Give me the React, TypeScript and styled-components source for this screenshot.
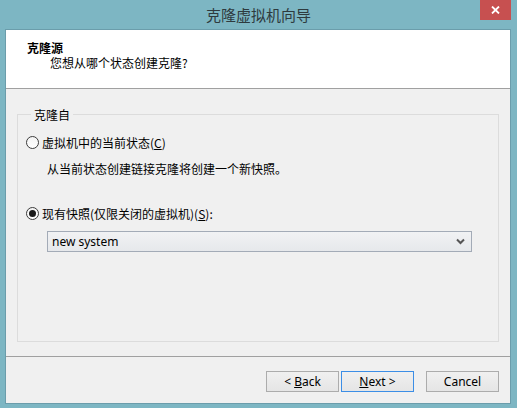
import React, { useState } from "react";
import styled, { createGlobalStyle } from "styled-components";

const GlobalStyle = createGlobalStyle`
  html, body {
    margin: 0;
    padding: 0;
  }
  body {
    font-family: "Noto Sans", "Noto Sans CJK SC", sans-serif;
    font-size: 12px;
    color: #000;
  }
`;

const Window = styled.div`
  width: 517px;
  height: 408px;
  box-sizing: border-box;
  background: #7db6c3;
  padding: 0 6px 4px 5px;
  display: flex;
  flex-direction: column;
`;

const TitleBar = styled.div`
  position: relative;
  height: 29px;
  margin: 0 -6px 0 -5px;
  display: flex;
  align-items: center;
  justify-content: center;
`;

const Title = styled.div`
  font-family: "Noto Sans CJK SC", sans-serif;
  font-size: 15px;
  color: #2e3a3e;
  padding-bottom: 1px;
`;

const CloseButton = styled.div`
  position: absolute;
  top: 0;
  right: 6px;
  width: 31px;
  height: 20px;
  background: #c75050;
  display: flex;
  align-items: center;
  justify-content: center;
`;

const Client = styled.div`
  flex: 1;
  border: 1px solid #6b9dab;
  background: #f0f0f0;
  display: flex;
  flex-direction: column;
`;

const Header = styled.div`
  height: 59px;
  box-sizing: border-box;
  background: #fff;
  border-bottom: 1px solid #a0a0a0;
  padding: 10px 0 0 21px;
  line-height: 15px;
  font-family: "Noto Sans CJK SC", sans-serif;
`;

const HeaderTitle = styled.div`
  font-weight: bold;
`;

const HeaderSub = styled.div`
  padding-left: 23px;
`;

const Body = styled.div`
  flex: 1;
  display: flex;
  flex-direction: column;
  padding: 17px 11px 14px 11px;
`;

const Group = styled.fieldset`
  flex: 1;
  margin: 0;
  padding: 0 8px;
  border: 1px solid #dcdcdc;
  min-width: 0;
`;

const Legend = styled.legend`
  margin-left: 5px;
  padding: 0 3px;
  line-height: 17px;
  font-family: "Noto Sans CJK SC", sans-serif;
`;

const RadioRow = styled.label<{ $top: number }>`
  display: flex;
  align-items: center;
  gap: 3px;
  height: 16px;
  margin-top: ${(p) => p.$top}px;
  font-family: "Noto Sans CJK SC", sans-serif;
  cursor: default;
`;

const RadioCircle = styled.span<{ $checked: boolean }>`
  width: 13px;
  height: 13px;
  box-sizing: border-box;
  border-radius: 50%;
  border: 1px solid #3c3c3c;
  background: linear-gradient(#f4f4f4, #ffffff);
  display: flex;
  align-items: center;
  justify-content: center;
  &::after {
    content: "";
    display: ${(p) => (p.$checked ? "block" : "none")};
    width: 7px;
    height: 7px;
    border-radius: 50%;
    background: #1a1a1a;
  }
`;

const Hint = styled.div`
  margin-top: 11px;
  padding-left: 21px;
  line-height: 16px;
  font-family: "Noto Sans CJK SC", sans-serif;
`;

const Combo = styled.div`
  margin: 10px 0 0 21px;
  width: 425px;
  height: 21px;
  box-sizing: border-box;
  border: 1px solid #a3abb7;
  background: linear-gradient(#f1f2f4, #e6e8eb);
  display: flex;
  align-items: center;
  justify-content: space-between;
  padding: 0 6px 0 4px;
  font-family: "Noto Sans", sans-serif;
  font-size: 12px;
`;

const Footer = styled.div`
  border-top: 1px solid #a0a0a0;
  height: 47px;
  box-sizing: border-box;
  padding: 14px 11px 0 0;
  display: flex;
  justify-content: flex-end;
`;

const ButtonGroup = styled.div`
  display: flex;
  gap: 2px;
  margin-right: 12px;
`;

const Button = styled.button<{ $default?: boolean }>`
  width: 73px;
  height: 21px;
  box-sizing: border-box;
  border: 1px solid ${(p) => (p.$default ? "#3c8ee6" : "#acacac")};
  background: linear-gradient(#f0f0f0, #e5e5e5);
  font-family: "Noto Sans", sans-serif;
  font-size: 12px;
  color: #000;
  padding: 0;
  line-height: 19px;
`;

const U = styled.span`
  text-decoration: underline;
`;

export default function App() {
  const [choice, setChoice] = useState<"current" | "snapshot">("snapshot");

  return (
    <>
      <GlobalStyle />
      <Window>
        <TitleBar>
          <Title>克隆虚拟机向导</Title>
          <CloseButton>
            <svg width="9" height="8" viewBox="0 0 9 8">
              <path d="M1 0.5 L8 7.5 M8 0.5 L1 7.5" stroke="#fff" strokeWidth="1.8" />
            </svg>
          </CloseButton>
        </TitleBar>
        <Client>
          <Header>
            <HeaderTitle>克隆源</HeaderTitle>
            <HeaderSub>您想从哪个状态创建克隆?</HeaderSub>
          </Header>
          <Body>
            <Group>
              <Legend>克隆自</Legend>
              <RadioRow $top={11} onClick={() => setChoice("current")}>
                <RadioCircle $checked={choice === "current"} />
                <span>
                  虚拟机中的当前状态(<U>C</U>)
                </span>
              </RadioRow>
              <Hint>从当前状态创建链接克隆将创建一个新快照。</Hint>
              <RadioRow $top={28} onClick={() => setChoice("snapshot")}>
                <RadioCircle $checked={choice === "snapshot"} />
                <span>
                  现有快照(仅限关闭的虚拟机)(<U>S</U>):
                </span>
              </RadioRow>
              <Combo>
                <span>new system</span>
                <svg width="9" height="7" viewBox="0 0 9 7">
                  <path d="M1 1.5 L4.5 5 L8 1.5" fill="none" stroke="#555" strokeWidth="2" />
                </svg>
              </Combo>
            </Group>
          </Body>
          <Footer>
            <ButtonGroup>
              <Button>
                &lt; <U>B</U>ack
              </Button>
              <Button $default>
                <U>N</U>ext &gt;
              </Button>
            </ButtonGroup>
            <Button>Cancel</Button>
          </Footer>
        </Client>
      </Window>
    </>
  );
}
